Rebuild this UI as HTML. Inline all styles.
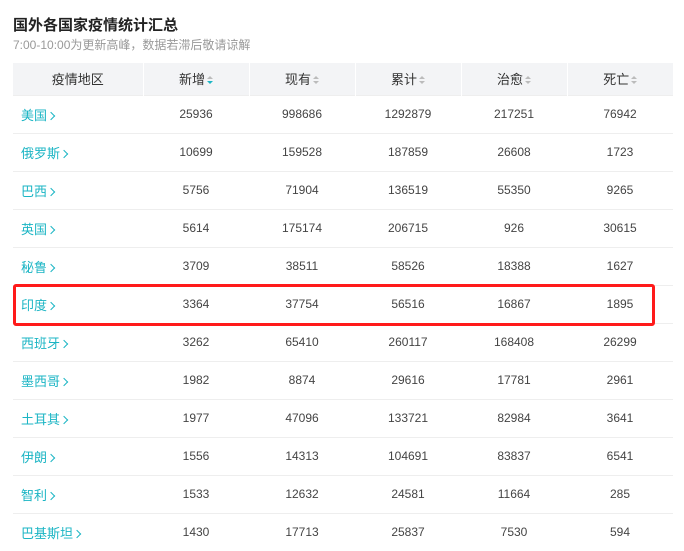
<!DOCTYPE html>
<html><head><meta charset="utf-8"><style>
*{margin:0;padding:0;box-sizing:border-box}
body{width:684px;height:551px;overflow:hidden;background:#fff;font-family:"Liberation Sans","Noto Sans CJK SC",sans-serif;position:relative}
.t{position:absolute;left:13px;top:14px;font-size:15px;font-weight:bold;color:#222}
.s{position:absolute;left:13px;top:36px;font-size:12px;color:#999}
table{position:absolute;left:13px;top:63px;border-collapse:collapse;table-layout:fixed;width:660px}
th{height:32px;background:#f3f4f6;font-size:13px;font-weight:normal;color:#333;border-left:1px solid #fff}
th:first-child{border-left:none}
td{height:38px;border-top:1px solid #eee;font-size:12px;color:#444;text-align:center}
td:first-child{text-align:left;padding-left:8px;color:#1bb5c4;font-size:13px}
.ar{display:inline-block;width:6px;height:6px;border-right:1px solid #1bb5c4;border-top:1px solid #1bb5c4;transform:rotate(45deg);margin-left:1px;position:relative;top:-1px}
.so{display:inline-block;vertical-align:middle;margin-left:2px;width:6px;height:10px;position:relative}
.so:before{content:"";position:absolute;left:0;top:0;border:3px solid transparent;border-bottom:3px solid #bbb;border-top:none}
.so:after{content:"";position:absolute;left:0;top:5px;border:3px solid transparent;border-top:3px solid #bbb;border-bottom:none}
.so.a:after{border-top-color:#1bb5c4}
.box{position:absolute;left:13px;top:284px;width:642px;height:42px;border:3px solid #ff1a1a;border-radius:3px}
</style></head><body>
<div class="t">国外各国家疫情统计汇总</div>
<div class="s">7:00-10:00为更新高峰，数据若滞后敬请谅解</div>
<table>
<colgroup><col style="width:130px"><col style="width:106px"><col style="width:106px"><col style="width:106px"><col style="width:106px"><col style="width:106px"></colgroup>
<tr><th>疫情地区</th><th>新增<span class="so a"></span></th><th>现有<span class="so"></span></th><th>累计<span class="so"></span></th><th>治愈<span class="so"></span></th><th>死亡<span class="so"></span></th></tr>
<tr><td>美国<span class="ar"></span></td><td>25936</td><td>998686</td><td>1292879</td><td>217251</td><td>76942</td></tr>
<tr><td>俄罗斯<span class="ar"></span></td><td>10699</td><td>159528</td><td>187859</td><td>26608</td><td>1723</td></tr>
<tr><td>巴西<span class="ar"></span></td><td>5756</td><td>71904</td><td>136519</td><td>55350</td><td>9265</td></tr>
<tr><td>英国<span class="ar"></span></td><td>5614</td><td>175174</td><td>206715</td><td>926</td><td>30615</td></tr>
<tr><td>秘鲁<span class="ar"></span></td><td>3709</td><td>38511</td><td>58526</td><td>18388</td><td>1627</td></tr>
<tr><td>印度<span class="ar"></span></td><td>3364</td><td>37754</td><td>56516</td><td>16867</td><td>1895</td></tr>
<tr><td>西班牙<span class="ar"></span></td><td>3262</td><td>65410</td><td>260117</td><td>168408</td><td>26299</td></tr>
<tr><td>墨西哥<span class="ar"></span></td><td>1982</td><td>8874</td><td>29616</td><td>17781</td><td>2961</td></tr>
<tr><td>土耳其<span class="ar"></span></td><td>1977</td><td>47096</td><td>133721</td><td>82984</td><td>3641</td></tr>
<tr><td>伊朗<span class="ar"></span></td><td>1556</td><td>14313</td><td>104691</td><td>83837</td><td>6541</td></tr>
<tr><td>智利<span class="ar"></span></td><td>1533</td><td>12632</td><td>24581</td><td>11664</td><td>285</td></tr>
<tr><td>巴基斯坦<span class="ar"></span></td><td>1430</td><td>17713</td><td>25837</td><td>7530</td><td>594</td></tr>
</table>
<div class="box"></div>
</body></html>
